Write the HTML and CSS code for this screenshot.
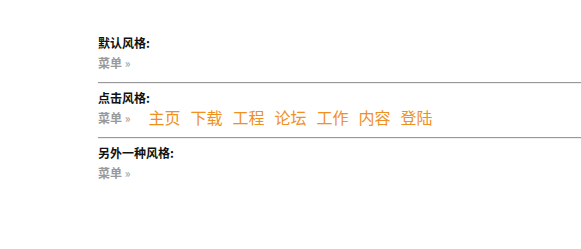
FILE: index.html
```html
<!DOCTYPE html>
<html>
<head>
<meta charset="utf-8">
<link rel="stylesheet" href="styles.css">
</head>
<body>
<div class="wrap">
  <div class="section">
    <div class="title">默认风格:</div>
    <div class="menu"><span class="label">菜单 <span class="raquo">»</span></span></div>
  </div>
  <hr class="sep">
  <div class="section">
    <div class="title">点击风格:</div>
    <div class="menu"><span class="label">菜单 <span class="raquo">»</span></span>
      <ul class="links">
        <li>主页</li><li>下载</li><li>工程</li><li>论坛</li><li>工作</li><li>内容</li><li>登陆</li>
      </ul>
    </div>
  </div>
  <hr class="sep">
  <div class="section">
    <div class="title">另外一种风格:</div>
    <div class="menu"><span class="label">菜单 <span class="raquo">»</span></span></div>
  </div>
</div>
</body>
</html>
```
FILE: styles.css
```css
body {
  margin: 0;
  background: #fff;
  font-family: "Noto Sans CJK SC", "Liberation Sans", sans-serif;
}
.wrap {
  padding: 34px 0 0 98px;
}
.section {
  display: flex;
  flex-direction: column;
}
.title {
  font-size: 12px;
  font-weight: bold;
  color: #111;
  line-height: 18px;
}
.menu {
  display: flex;
  align-items: center;
  height: 20px;
}
.label {
  font-size: 12px;
  color: #999;
  font-weight: bold;
}
.raquo {
  font-size: 12px;
  font-weight: normal;
}
.links {
  display: flex;
  list-style: none;
  margin: 0 0 0 18px;
  padding: 0;
  gap: 10px;
}
.links li {
  font-size: 16px;
  color: #f0901e;
}
.sep {
  margin: 10px 0 5px 0;
  border: 0;
  border-top: 1px solid #999;
  border-bottom: 1px solid #eee;
  height: 0;
}
```
